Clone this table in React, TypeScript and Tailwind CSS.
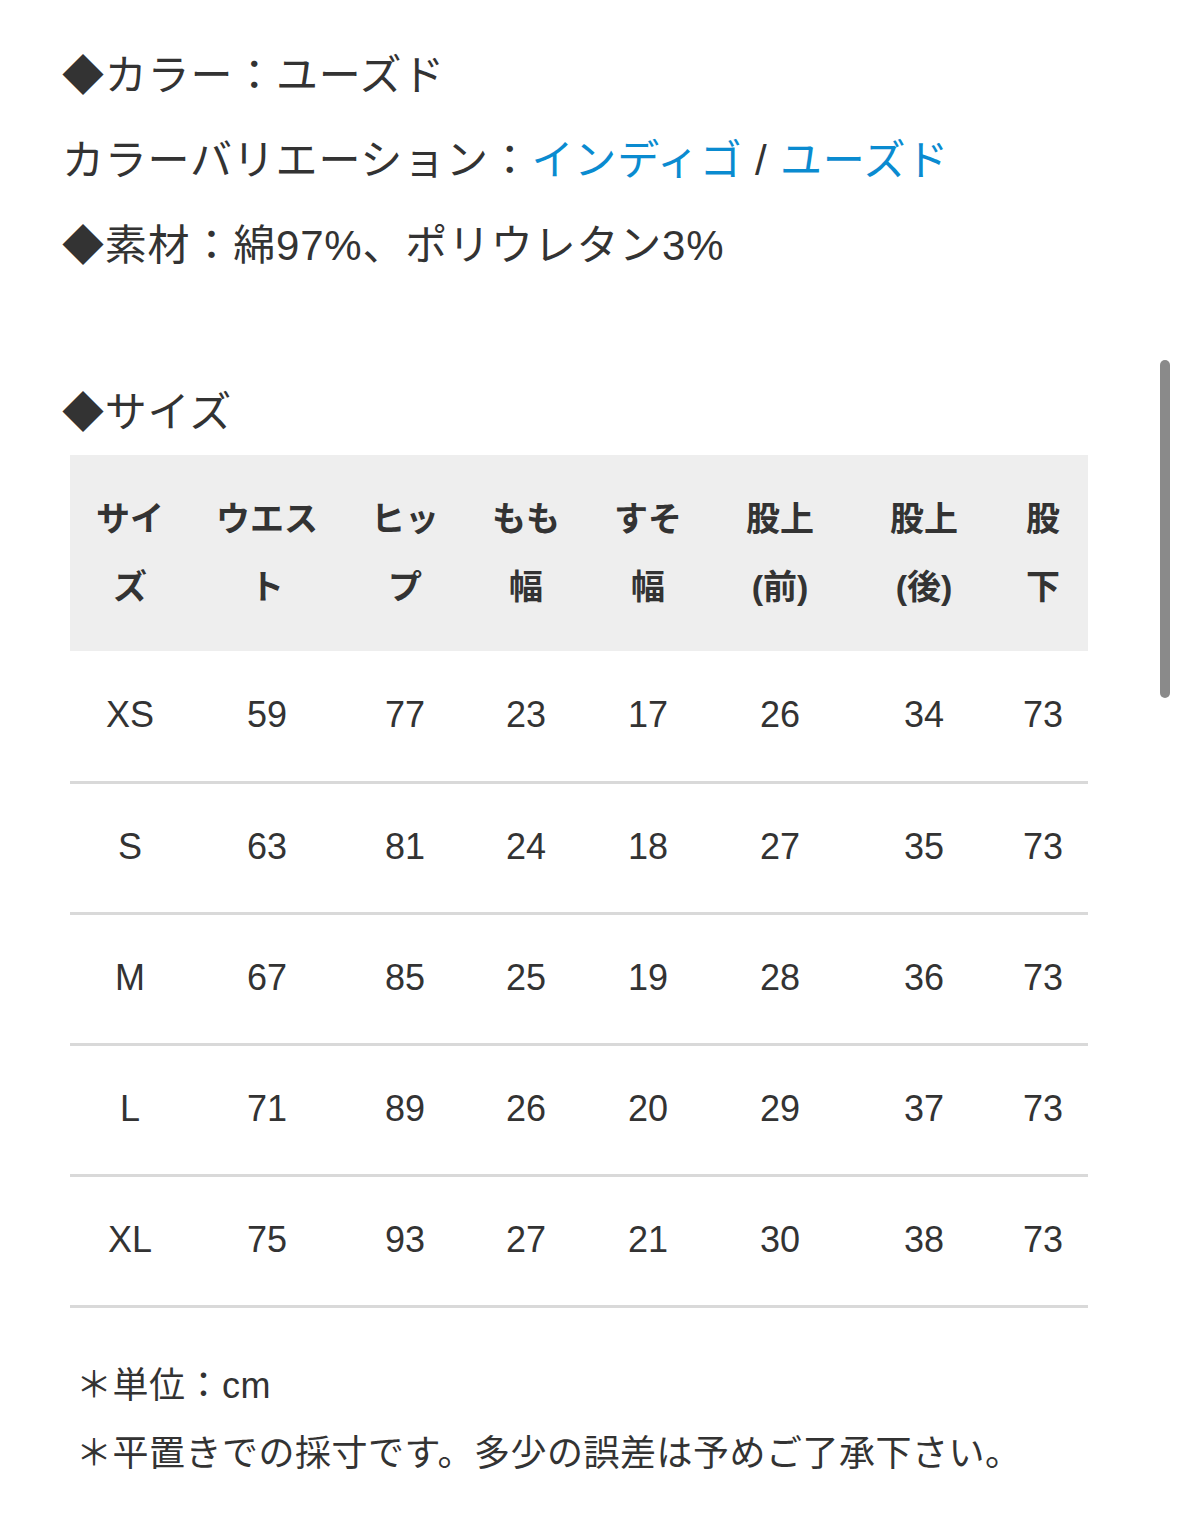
import React from "react";

const headers: string[][] = [
  ["サイ", "ズ"],
  ["ウエス", "ト"],
  ["ヒッ", "プ"],
  ["もも", "幅"],
  ["すそ", "幅"],
  ["股上", "(前)"],
  ["股上", "(後)"],
  ["股", "下"],
];

const widths = [120, 154, 122, 120, 124, 140, 148, 90];

const rows: string[][] = [
  ["XS", "59", "77", "23", "17", "26", "34", "73"],
  ["S", "63", "81", "24", "18", "27", "35", "73"],
  ["M", "67", "85", "25", "19", "28", "36", "73"],
  ["L", "71", "89", "26", "20", "29", "37", "73"],
  ["XL", "75", "93", "27", "21", "30", "38", "73"],
];

export default function App() {
  return (
    <div
      className="relative w-[1179px] h-[1517px] bg-white text-[#333333] overflow-hidden"
      style={{ fontFamily: '"Liberation Sans", "Noto Sans CJK JP", sans-serif' }}
    >
      <div className="pl-[62px] pt-[33px]">
        <p className="text-[42px] leading-[85px] tracking-[0.8px]">◆カラー：ユーズド</p>
        <p className="text-[42px] leading-[85px] tracking-[0.8px]">
          カラーバリエーション：<span className="text-[#0a8bd0]">インディゴ</span> /{" "}
          <span className="text-[#0a8bd0]">ユーズド</span>
        </p>
        <p className="text-[42px] leading-[85px] tracking-[0.8px]">◆素材：綿97%、ポリウレタン3%</p>
        <p className="text-[42px] leading-[85px] tracking-[0.8px] mt-[82px]">◆サイズ</p>

        <table className="ml-[8px] mt-[0px] border-collapse w-[1018px] table-fixed">
          <colgroup>
            {widths.map((w, i) => (
              <col key={i} style={{ width: w }} />
            ))}
          </colgroup>
          <thead>
            <tr className="bg-[#eeeeee] h-[196px]">
              {headers.map((h, i) => (
                <th key={i} className="text-[34px] leading-[68px] font-bold text-center align-middle p-0">
                  {h[0]}
                  <br />
                  {h[1]}
                </th>
              ))}
            </tr>
          </thead>
          <tbody>
            {rows.map((r, ri) => (
              <tr key={ri} className="h-[131px] border-b-[3px] border-[#d9d9d9]">
                {r.map((c, ci) => (
                  <td key={ci} className="text-[36px] text-center align-middle p-0 pb-[2px]">
                    {c}
                  </td>
                ))}
              </tr>
            ))}
          </tbody>
        </table>

        <div className="pl-[14px] mt-[44px] text-[36px] leading-[68px] tracking-[0.5px]">
          <p>＊単位：cm</p>
          <p>＊平置きでの採寸です。多少の誤差は予めご了承下さい。</p>
        </div>
      </div>

      <div className="absolute left-[1160px] top-[360px] w-[10px] h-[338px] rounded-full bg-[#8a8a8a]" />
    </div>
  );
}
